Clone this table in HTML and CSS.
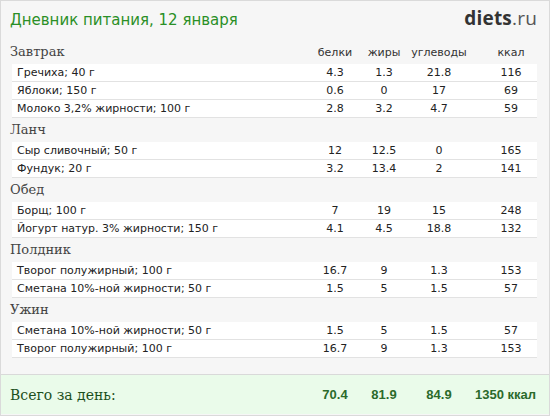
FILE: index.html
```html
<html>
	<head>
		<meta charset="utf-8">
		<link rel="stylesheet" href="styles.css">
	</head>
<body>
<div class="diary">

	<div class="top">
		<h1 class="title">Дневник питания, 12 января</h1>
		<div class="logo"><b>diets</b>.ru</div>
	</div>

	<div class="meal">
		<div class="meal-head"><h2>Завтрак</h2><span>белки</span><span>жиры</span><span>углеводы</span><span>ккал</span></div>
		<div class="item"><span class="name">Гречиха; 40 г</span><span>4.3</span><span>1.3</span><span>21.8</span><span>116</span></div>
		<div class="item"><span class="name">Яблоки; 150 г</span><span>0.6</span><span>0</span><span>17</span><span>69</span></div>
		<div class="item"><span class="name">Молоко 3,2% жирности; 100 г</span><span>2.8</span><span>3.2</span><span>4.7</span><span>59</span></div>
	</div>

	<div class="meal">
		<div class="meal-head"><h2>Ланч</h2></div>
		<div class="item"><span class="name">Сыр сливочный; 50 г</span><span>12</span><span>12.5</span><span>0</span><span>165</span></div>
		<div class="item"><span class="name">Фундук; 20 г</span><span>3.2</span><span>13.4</span><span>2</span><span>141</span></div>
	</div>

	<div class="meal">
		<div class="meal-head"><h2>Обед</h2></div>
		<div class="item"><span class="name">Борщ; 100 г</span><span>7</span><span>19</span><span>15</span><span>248</span></div>
		<div class="item"><span class="name">Йогурт натур. 3% жирности; 150 г</span><span>4.1</span><span>4.5</span><span>18.8</span><span>132</span></div>
	</div>

	<div class="meal">
		<div class="meal-head"><h2>Полдник</h2></div>
		<div class="item"><span class="name">Творог полужирный; 100 г</span><span>16.7</span><span>9</span><span>1.3</span><span>153</span></div>
		<div class="item"><span class="name">Сметана 10%-ной жирности; 50 г</span><span>1.5</span><span>5</span><span>1.5</span><span>57</span></div>
	</div>

	<div class="meal">
		<div class="meal-head"><h2>Ужин</h2></div>
		<div class="item"><span class="name">Сметана 10%-ной жирности; 50 г</span><span>1.5</span><span>5</span><span>1.5</span><span>57</span></div>
		<div class="item"><span class="name">Творог полужирный; 100 г</span><span>16.7</span><span>9</span><span>1.3</span><span>153</span></div>
	</div>

	<div class="total">
		<span class="total-label">Всего за день:</span><b>70.4</b><b>81.9</b><b>84.9</b><b class="total-kcal">1350 ккал</b>
	</div>

</div>
</body>
</html>
```

FILE: styles.css
```css
	body {
		margin: 0;
	}
	.diary {
		box-sizing: border-box;
		width: 550px;
		height: 416px;
		border: 1px solid #dadada;
		background: #f6f6f6;
		font-family: "DejaVu Sans", Verdana, sans-serif;
		font-size: 11px;
		color: #222;
	}

	.top {
		display: flex;
		justify-content: space-between;
		align-items: flex-end;
		height: 39px;
		padding: 0 12px 0 9px;
		box-sizing: border-box;
	}
	.title {
		margin: 0 0 11px;
		font-weight: normal;
		font-size: 15px;
		line-height: 18px;
		color: #2a8f26;
	}
	.logo {
		margin-bottom: 12px;
		font-family: "Open Sans", sans-serif;
		font-size: 19px;
		line-height: 20px;
		color: #555;
		letter-spacing: 0.2px;
	}
	.logo b {
		color: #333;
	}

	/* columns: name | белки | жиры | углеводы | ккал */
	.meal-head, .item, .total {
		display: grid;
		grid-template-columns: 1fr 52px 46px 64px 66px;
		align-items: end;
	}
	.meal-head > span, .item > span:not(.name), .total > b {
		text-align: center;
	}
	.meal-head > span:last-child, .item > span:last-child {
		padding: 0 2px 0 16px;
	}

	.meal-head {
		height: 24px;
		margin: 0 12px 0 9px;
		padding-bottom: 5px;
		box-sizing: border-box;
		color: #333;
	}
	.meal-head h2 {
		margin: 0;
		font-family: "DejaVu Serif", Georgia, serif;
		font-weight: normal;
		font-size: 13px;
		line-height: 15px;
		color: #444;
	}
	.meal-head span {
		line-height: 13px;
	}

	.item {
		height: 18px;
		box-sizing: border-box;
		margin: 0 12px 0 11px;
		background: #fff;
		border-bottom: 1px solid #e2e2e2;
		align-items: center;
		line-height: 17px;
	}
	.item .name {
		padding-left: 5px;
	}

	.total {
		margin-top: 16px;
		height: 40px;
		padding: 0 12px 0 9px;
		box-sizing: border-box;
		background: #eafbea;
		border-top: 1px solid #d9d9d9;
		align-items: center;
		color: #2b6a2b;
	}
	.total-label {
		font-family: "DejaVu Serif", Georgia, serif;
		font-size: 14px;
		color: #1c4f1c;
	}
	.total b {
		font-family: "Liberation Sans", Arial, sans-serif;
		font-size: 13px;
		white-space: nowrap;
	}
	.total .total-kcal {
		text-align: right;
		padding-right: 1px;
	}
```
